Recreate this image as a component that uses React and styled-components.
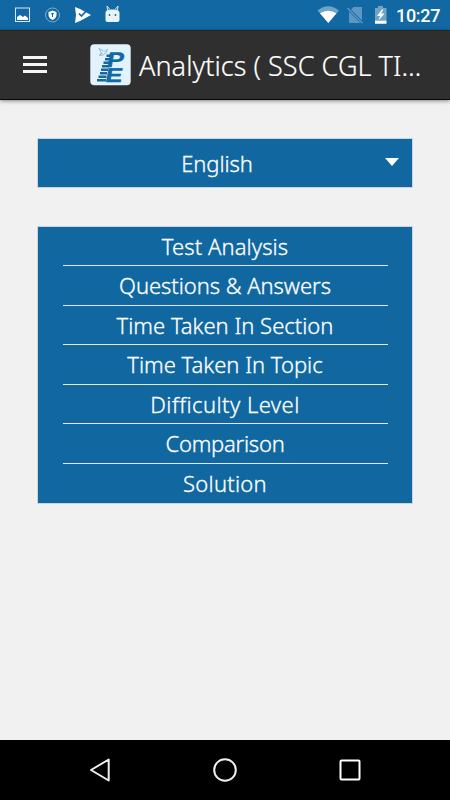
import React from 'react';
import styled, { createGlobalStyle } from 'styled-components';

const GlobalStyle = createGlobalStyle`
  * {
    box-sizing: border-box;
  }
  body {
    margin: 0;
    background: #f1f1f1;
  }
`;

const Screen = styled.div`
  display: flex;
  flex-direction: column;
  width: 450px;
  height: 800px;
  overflow: hidden;
  background: #f1f1f1;
  color: #fff;
  font-family: 'Noto Sans', 'Open Sans', sans-serif;
`;

const StatusBar = styled.header`
  display: flex;
  flex: none;
  align-items: center;
  justify-content: space-between;
  height: 30px;
  padding: 0 10px 0 14px;
  background: #1168a2;
`;

const StatusGroup = styled.div`
  display: flex;
  align-items: center;
  height: 30px;
  svg {
    display: block;
  }
`;

const Clock = styled.span`
  width: 44px;
  margin-left: 8px;
  font: 500 18px/30px Roboto, sans-serif;
  letter-spacing: -0.3px;
  white-space: nowrap;
  padding-top: 1px;
`;

const Toolbar = styled.div`
  display: flex;
  flex: none;
  align-items: center;
  height: 70px;
  padding-left: 23px;
  background: #2f2f2f;
  border-top: 1px solid #33210b;
  border-bottom: 1px solid #080808;
  box-shadow: 0 1px 4px rgba(0, 0, 0, 0.45);
`;

const MenuButton = styled.button`
  display: flex;
  flex-direction: column;
  gap: 4px;
  width: 24px;
  margin-right: 43px;
  margin-top: -1px;
  padding: 0;
  border: 0;
  background: none;
`;

const MenuLine = styled.span`
  height: 3px;
  background: #f5f5f5;
`;

const Title = styled.h1`
  margin: 2px 0 0 8px;
  font-size: 27px;
  font-weight: 300;
  line-height: 40px;
  letter-spacing: ${(props) => props.$tracking}px;
  white-space: nowrap;
  -webkit-text-stroke: 0.2px #fff;
`;

const Content = styled.main`
  display: flex;
  flex: 1;
  flex-direction: column;
  gap: 40px;
  padding: 39px 38px 0;
`;

const Select = styled.div`
  display: flex;
  align-items: center;
  height: 48px;
  padding-right: 13px;
  background: #1168a0;
  box-shadow: 0 0 0 1px #cbd5e2;
`;

const SelectLabel = styled.span`
  flex: 1;
  padding-left: 11px;
  font-size: 22px;
  font-weight: 300;
  line-height: 40px;
  text-align: center;
  letter-spacing: ${(props) => props.$tracking}px;
  -webkit-text-stroke: 0.3px #fff;
`;

const Caret = styled.span`
  width: 0;
  height: 0;
  margin-bottom: 2px;
  border: 7px solid transparent;
  border-top: 8px solid #fff;
  border-bottom: 0;
`;

const Menu = styled.ul`
  margin: 0;
  padding: 0 24.5px;
  height: 275.5px;
  list-style: none;
  background: #1168a0;
  box-shadow: 0 0 0 1px #cbd5e2;
`;

const MenuItem = styled.li`
  height: 39.6px;
  font-size: 22px;
  font-weight: 300;
  line-height: 38px;
  text-align: center;
  white-space: nowrap;
  letter-spacing: ${(props) => props.$tracking}px;
  border-bottom: 1px solid #dfe8f1;
  -webkit-text-stroke: 0.3px #fff;
  &:first-child {
    height: 39.1px;
  }
  &:last-child {
    border-bottom: 0;
  }
`;

const NavBar = styled.nav`
  display: flex;
  flex: none;
  align-items: center;
  justify-content: space-between;
  height: 60px;
  padding: 0 87px;
  background: #000;
`;

const LogoBox = styled.svg`
  display: block;
  flex: none;
`;

const items = [
  { label: 'Test Analysis', tracking: 0.08 },
  { label: 'Questions & Answers', tracking: -0.05 },
  { label: 'Time Taken In Section', tracking: 0 },
  { label: 'Time Taken In Topic', tracking: 0 },
  { label: 'Difficulty Level', tracking: 0.45 },
  { label: 'Comparison', tracking: -0.25 },
  { label: 'Solution', tracking: 0.25 },
];

const Notifications = () => (
  <svg width="110" height="30" viewBox="14 0 110 30">
    <rect x="15.5" y="8" width="14" height="13.5" fill="none" stroke="#d9e9f3" />
    <path d="M17 20v-3l3-2 3 2 2-1.5 3 2.5v2z" fill="#fff" />
    <circle cx="52.5" cy="15" r="7" fill="none" stroke="#7fadcd" />
    <path d="M52.5 10.5l4 1.5v3q0 3-4 5-4-2-4-5v-3z" fill="#fff" />
    <path d="M51 13h3l-1 2v2h-1v-2z" fill="#1168a2" />
    <path d="M75 7l5 2 11 6-11 6-5 2 1-8z" fill="#fff" />
    <path d="M79 13.500l2.500 2.500 6-6.500" fill="none" stroke="#1168a2" strokeWidth="1.700" />
    <path d="M107.500 10l-.5-4 2.500 3M117.500 10l.5-4-2.500 3" fill="none" stroke="#d9e9f3" />
    <path d="M105.500 13q0-3 4-3.500h6q4 .5 4 3.500v7q0 2-2 2h-10q-2 0-2-2z" fill="#e8f3fa" />
    <circle cx="109.500" cy="15" r=".9" fill="#1168a2" />
    <circle cx="115.500" cy="15" r=".9" fill="#1168a2" />
  </svg>
);

const SystemIcons = () => (
  <svg width="71" height="30" viewBox="317 0 71 30">
    <path d="M317.500 10.500q10.500-8.500 21.500 0L328.300 23z" fill="#70a4c7" />
    <path d="M320 13.300q8.300-5 16.500 0L328.300 23z" fill="#fff" />
    <path d="M351 9.500l2.500-2.500H362v13.500zM349 11.500L360.500 23H349z" fill="#5b97c0" />
    <path d="M347.500 8l15 15.300" stroke="#5b97c0" strokeWidth="1.400" />
    <path d="M375 8h3V6h5v2h3.500v13H375z" fill="#70a4c7" />
    <path d="M375 20.700h11.500v3H375zM382 9.500l-5 6.500h3l-1.500 4.500 6-7h-3.500l2.500-4z" fill="#fff" />
  </svg>
);

// staircase runs down the left side of the letters
const steps = [
  [106.5, 54.5, 5],
  [105, 58, 6],
  [103.5, 61.500, 7],
  [102, 65, 7],
  [101, 68.500, 7],
  [100, 72, 7],
  [98.5, 75.500, 8],
  [97, 79, 9],
];

const Logo = () => (
  <LogoBox width="41" height="42" viewBox="90 44 41 42">
    <rect x="90.300" y="44.300" width="40.400" height="41" rx="4" fill="#e3f3fe" />
    <g
      fill="#1168a2"
      stroke="#1168a2"
      strokeWidth=".4"
      fontFamily="Liberation Sans, sans-serif"
      fontWeight="700"
    >
      <text transform="translate(106 66.500) skewX(-10)" fontSize="21" textLength="17" lengthAdjust="spacingAndGlyphs">P</text>
      <text transform="translate(104.500 81.700) skewX(-10)" fontSize="20" textLength="17" lengthAdjust="spacingAndGlyphs">E</text>
    </g>
    <g fill="#1168a2">
      {steps.map(([x, y, width]) => (
        <rect key={y} x={x} y={y} width={width} height="2.500" />
      ))}
    </g>
    <path
      d="M99 48.500l4 2 1.500 1.500 3-3-1.500 4-3 2-3.500.5 2-2.500zM99.500 54.500l3-1"
      fill="none"
      stroke="#6fa9cf"
      strokeWidth=".7"
    />
  </LogoBox>
);

const App = () => (
  <>
    <GlobalStyle />
    <Screen>
      <StatusBar>
        <StatusGroup>
          <Notifications />
        </StatusGroup>
        <StatusGroup>
          <SystemIcons />
          <Clock>10:27</Clock>
        </StatusGroup>
      </StatusBar>
      <Toolbar>
        <MenuButton aria-label="Menu">
          <MenuLine />
          <MenuLine />
          <MenuLine />
        </MenuButton>
        <Logo />
        <Title $tracking={0.05}>Analytics ( SSC CGL TI…</Title>
      </Toolbar>
      <Content>
        <Select>
          <SelectLabel $tracking={-0.1}>English</SelectLabel>
          <Caret />
        </Select>
        <Menu>
          {items.map(({ label, tracking }) => (
            <MenuItem key={label} $tracking={tracking}>{label}</MenuItem>
          ))}
        </Menu>
      </Content>
      <NavBar>
        <svg width="26" height="26" viewBox="0 0 26 26" fill="none" stroke="#eee" strokeWidth="2">
          <path d="M21.700 2.500v21L4 13z" strokeLinejoin="round" />
        </svg>
        <svg width="26" height="26" viewBox="0 0 26 26" fill="none" stroke="#eee" strokeWidth="2">
          <circle cx="13" cy="13" r="10.800" />
        </svg>
        <svg width="26" height="26" viewBox="0 0 26 26" fill="none" stroke="#fff" strokeWidth="2">
          <rect x="3.500" y="3.500" width="19" height="19" rx="1" />
        </svg>
      </NavBar>
    </Screen>
  </>
);

export default App;
